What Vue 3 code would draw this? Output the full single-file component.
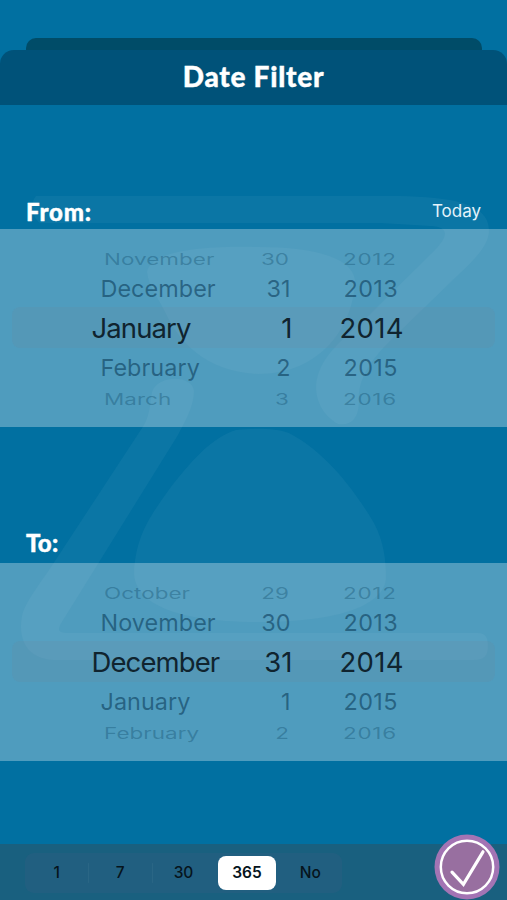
<template>
  <div class="screen">
    <svg class="watermark" viewBox="0 0 507 900" aria-hidden="true">
      <path d="M36 196 H400 C450 197 489 203 489 230 C489 246 474 260 456 277 L393 338 C367 363 358 382 359 400 C359 420 350 426 338 424 C322 415 316 400 316 386 C318 358 342 340 362 322 L432 253 C447 238 452 227 430 226 L380 223 H40 C32 218 30 202 36 196 Z" />
      <path d="M147 272 C151 250 205 246 258 247 C316 247 352 258 355 280 C354 325 322 374 258 374 C205 372 178 340 166 314 C158 297 149 288 147 272 Z" />
      <path d="M152 392 C158 374 193 375 194 391 C194 407 184 423 178 435 L65 617 C57 629 57 632 66 633 H478 C487 633 488 640 488 646 C488 656 484 660 474 660 H54 C25 659 18 637 22 616 C25 602 40 584 53 564 L144 425 C150 414 150 403 152 392 Z" />
      <path d="M236 430 C254 428 276 428 289 433 C327 453 355 491 374 523 C384 542 386 560 386 578 C385 600 353 622 258 622 C168 622 134 600 134 572 C136 535 151 515 168 491 C190 462 212 437 236 430 Z" />
    </svg>

    <div class="back-sheet"></div>
    <header class="title-bar">
      <h1>Date Filter</h1>
    </header>

    <main class="content">
      <section v-for="picker in pickers" :key="picker.label" class="date-section">
        <div class="section-head">
          <h2>{{ picker.label }}</h2>
          <button v-if="picker.action" class="today-btn">{{ picker.action }}</button>
        </div>
        <div class="wheel">
          <div
            v-for="(row, i) in picker.rows"
            :key="i"
            :class="['wheel-row', rowClasses[i]]"
          >
            <span class="month">{{ row[0] }}</span>
            <span class="day">{{ row[1] }}</span>
            <span class="year">{{ row[2] }}</span>
          </div>
        </div>
      </section>
    </main>

    <footer class="toolbar">
      <div class="segments">
        <button
          v-for="option in options"
          :key="option"
          :class="['segment', { active: option === selected }]"
          @click="selected = option"
        >
          {{ option }}
        </button>
      </div>
      <button class="confirm-btn" aria-label="Confirm">
        <svg viewBox="0 0 66 66">
          <circle class="disc" cx="33" cy="33" r="32.5" />
          <circle class="ring" cx="33" cy="33" r="26.2" />
          <path class="tick" d="M18 38.2 L29.4 50.3 L49 17.8" />
        </svg>
      </button>
    </footer>
  </div>
</template>

<script setup>
import { ref } from 'vue'

const rowClasses = ['outer', 'near', 'current', 'near', 'outer']

const pickers = [
  {
    label: 'From:',
    action: 'Today',
    rows: [
      ['November', 30, 2012],
      ['December', 31, 2013],
      ['January', 1, 2014],
      ['February', 2, 2015],
      ['March', 3, 2016]
    ]
  },
  {
    label: 'To:',
    rows: [
      ['October', 29, 2012],
      ['November', 30, 2013],
      ['December', 31, 2014],
      ['January', 1, 2015],
      ['February', 2, 2016]
    ]
  }
]

const options = ['1', '7', '30', '365', 'No']
const selected = ref('365')
</script>

<style>
body {
  margin: 0;
  background: #0170a1;
}
</style>

<style scoped>
.screen {
  position: relative;
  z-index: 0;
  box-sizing: border-box;
  width: 507px;
  height: 900px;
  padding-top: 38px;
  display: flex;
  flex-direction: column;
  overflow: hidden;
  background: #0170a1;
  font-family: Inter, 'Liberation Sans', sans-serif;
}

.watermark {
  position: absolute;
  inset: 0;
  z-index: -1;
  fill: rgba(255, 255, 255, 0.045);
}

button {
  padding: 0;
  border: none;
  background: none;
  font-family: inherit;
}

.back-sheet {
  height: 12px;
  margin: 0 25px 0 26px;
  border-radius: 10px 10px 0 0;
  background: #004c68;
}

.title-bar {
  height: 55px;
  display: flex;
  align-items: center;
  justify-content: center;
  border-radius: 14px 14px 0 0;
  background: #005279;
}

h1,
h2 {
  margin: 0;
  color: #fff;
  font-family: Lato, sans-serif;
  font-weight: 900;
  -webkit-text-stroke: 0.4px #fff;
}

h1 {
  height: 55px;
  font-size: 28px;
  line-height: 53px;
  letter-spacing: 0.75px;
}

.content {
  flex: 1;
  padding-top: 92px;
  display: flex;
  flex-direction: column;
  gap: 101px;
}

.section-head {
  height: 32px;
  padding: 0 26px;
  display: flex;
  align-items: flex-start;
  justify-content: space-between;
}

.date-section + .date-section .section-head {
  height: 35px;
}

h2 {
  font-size: 24px;
  line-height: 29px;
  letter-spacing: 0.8px;
}

.date-section + .date-section h2 {
  letter-spacing: 0.2px;
}

.today-btn {
  color: #e4f3fb;
  font-size: 17px;
  line-height: 28px;
}

.wheel {
  box-sizing: border-box;
  height: 198px;
  padding: 17px 12px 0;
  background: rgba(255, 255, 255, 0.31);
}

.wheel-row {
  display: grid;
  grid-template-columns: 150px 51px 1fr;
  align-items: center;
  white-space: nowrap;
}

.day {
  text-align: right;
}

.current {
  height: 41px;
  padding-left: 79.5px;
  border-radius: 8px;
  background: rgba(120, 120, 140, 0.12);
  color: #10242f;
  font-size: 27.5px;
  line-height: 38px;
  letter-spacing: -0.9px;
}

.current .day {
  padding-right: 0;
  letter-spacing: 0;
}

.current .year {
  padding-left: 47px;
  letter-spacing: 0.3px;
}

.near {
  height: 38px;
  padding-left: 88.5px;
  color: rgba(8, 55, 85, 0.56);
  font-size: 23.4px;
  letter-spacing: 0.05px;
}

.near .day {
  padding-right: 11px;
}

.near .year {
  padding-left: 42px;
  letter-spacing: 0.4px;
}

.outer {
  height: 23px;
  padding-left: 92px;
  color: rgba(8, 65, 95, 0.32);
  font-size: 22.5px;
}

.outer:last-child {
  height: 19px;
}

.outer span {
  transform: scaleY(0.68);
}

.outer .day {
  padding-right: 16px;
}

.outer .year {
  padding-left: 38px;
  letter-spacing: 0.7px;
}

.toolbar {
  box-sizing: border-box;
  height: 56px;
  padding: 0 7px 0 25px;
  display: flex;
  align-items: center;
  justify-content: space-between;
  background: #19607f;
}

.segments {
  height: 40px;
  width: 317px;
  margin-top: 1px;
  display: grid;
  grid-template-columns: repeat(5, 1fr);
  align-items: center;
  border-radius: 9px;
  background: rgba(80, 95, 135, 0.16);
}

.segment {
  height: 34px;
  margin: 0 3px;
  border-radius: 8px;
  color: #06141c;
  font-size: 15.5px;
  font-weight: 500;
}

.segment.active {
  background: #fff;
  font-weight: 600;
}

/* faint separators after the first two segments */
.segment:nth-child(-n + 2):not(.active) {
  margin: 0 -1px;
  background: linear-gradient(#2a6685, #2a6685) right center / 1px 20px no-repeat;
}

.confirm-btn {
  width: 66px;
  height: 66px;
  margin-top: -10px;
}

.confirm-btn svg {
  display: block;
}

.disc {
  fill: #a374b4;
}

.ring {
  fill: #986fa0;
  stroke: #fff;
  stroke-width: 2.5;
}

.tick {
  fill: none;
  stroke: #fff;
  stroke-width: 3.2;
  stroke-linecap: round;
}
</style>
